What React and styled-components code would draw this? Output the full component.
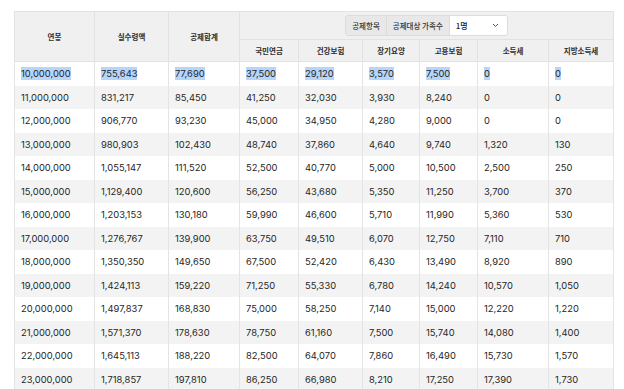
import { createGlobalStyle, styled } from "styled-components";

const Global = createGlobalStyle`
  body {
    margin: 0;
    background: #ffffff;
    font-family: Inter, "Noto Sans CJK KR", sans-serif;
  }
`;

const Page = styled.div`
  padding: 11px 0 0 14px;
`;

const Table = styled.table`
  width: 600px;
  border-collapse: collapse;
  table-layout: fixed;
  border: 1px solid #e3e3e3;
`;

const Th = styled.th`
  background: #f0f0f0;
  border: 1px solid #e2e2e2;
  height: ${(p) => p.$h || 21}px;
  padding: 0;
  font-family: "Noto Sans CJK KR", sans-serif;
  font-size: 7.5px;
  font-weight: 700;
  color: #2e2e2e;
  text-align: center;
  vertical-align: middle;
`;

const Row = styled.tr`
  background: ${(p) => (p.$odd ? "#f3f3f3" : "#ffffff")};
`;

const Td = styled.td`
  border-left: 1px solid #e4e4e4;
  border-right: 1px solid #e4e4e4;
  height: 23.5px;
  padding: 0 0 0 6px;
  font-size: 9.4px;
  color: #262626;
  white-space: nowrap;
`;

const Sel = styled.span`
  background: ${(p) => (p.$on ? "#b5d5fb" : "transparent")};
  padding: 1px 0;
`;

const Group = styled.div`
  display: inline-flex;
  align-items: stretch;
  height: 19px;
  border: 1px solid #dcdcdc;
  border-radius: 3px;
  overflow: hidden;
  font-weight: 500;
`;

const Seg = styled.span`
  display: flex;
  align-items: center;
  padding: 0 6px;
  background: #e8e8e8;
  border-right: 1px solid #dcdcdc;
  color: #333;
`;

const Select = styled.span`
  display: flex;
  align-items: center;
  justify-content: space-between;
  width: 43px;
  padding: 0 8px 0 6px;
  background: #ffffff;
  color: #222;
  font-size: 8px;
`;

const cols = [80, 74, 71, 59, 64, 57, 58, 71, 65];
const subs = ["국민연금", "건강보험", "장기요양", "고용보험", "소득세", "지방소득세"];

const data = [
  ["10,000,000", "755,643", "77,690", "37,500", "29,120", "3,570", "7,500", "0", "0"],
  ["11,000,000", "831,217", "85,450", "41,250", "32,030", "3,930", "8,240", "0", "0"],
  ["12,000,000", "906,770", "93,230", "45,000", "34,950", "4,280", "9,000", "0", "0"],
  ["13,000,000", "980,903", "102,430", "48,740", "37,860", "4,640", "9,740", "1,320", "130"],
  ["14,000,000", "1,055,147", "111,520", "52,500", "40,770", "5,000", "10,500", "2,500", "250"],
  ["15,000,000", "1,129,400", "120,600", "56,250", "43,680", "5,350", "11,250", "3,700", "370"],
  ["16,000,000", "1,203,153", "130,180", "59,990", "46,600", "5,710", "11,990", "5,360", "530"],
  ["17,000,000", "1,276,767", "139,900", "63,750", "49,510", "6,070", "12,750", "7,110", "710"],
  ["18,000,000", "1,350,350", "149,650", "67,500", "52,420", "6,430", "13,490", "8,920", "890"],
  ["19,000,000", "1,424,113", "159,220", "71,250", "55,330", "6,780", "14,240", "10,570", "1,050"],
  ["20,000,000", "1,497,837", "168,830", "75,000", "58,250", "7,140", "15,000", "12,220", "1,220"],
  ["21,000,000", "1,571,370", "178,630", "78,750", "61,160", "7,500", "15,740", "14,080", "1,400"],
  ["22,000,000", "1,645,113", "188,220", "82,500", "64,070", "7,860", "16,490", "15,730", "1,570"],
  ["23,000,000", "1,718,857", "197,810", "86,250", "66,980", "8,210", "17,250", "17,390", "1,730"],
];

export default function App() {
  return (
    <Page>
      <Global />
      <Table>
        <colgroup>
          {cols.map((w, i) => (
            <col key={i} style={{ width: w }} />
          ))}
        </colgroup>
        <thead>
          <tr>
            <Th rowSpan={2}>연봉</Th>
            <Th rowSpan={2}>실수령액</Th>
            <Th rowSpan={2}>공제합계</Th>
            <Th colSpan={6} $h={27}>
              <Group>
                <Seg>공제항목</Seg>
                <Seg>공제대상 가족수</Seg>
                <Select>
                  1명
                  <svg width="7" height="5" viewBox="0 0 7 5">
                    <path d="M1 1l2.5 2.5L6 1" fill="none" stroke="#444" strokeWidth="0.9" />
                  </svg>
                </Select>
              </Group>
            </Th>
          </tr>
          <tr>
            {subs.map((s) => (
              <Th key={s}>{s}</Th>
            ))}
          </tr>
        </thead>
        <tbody>
          {data.map((r, i) => (
            <Row key={r[0]} $odd={i % 2 === 1}>
              {r.map((c, j) => (
                <Td key={j}>
                  <Sel $on={i === 0}>{c}</Sel>
                </Td>
              ))}
            </Row>
          ))}
        </tbody>
      </Table>
    </Page>
  );
}
